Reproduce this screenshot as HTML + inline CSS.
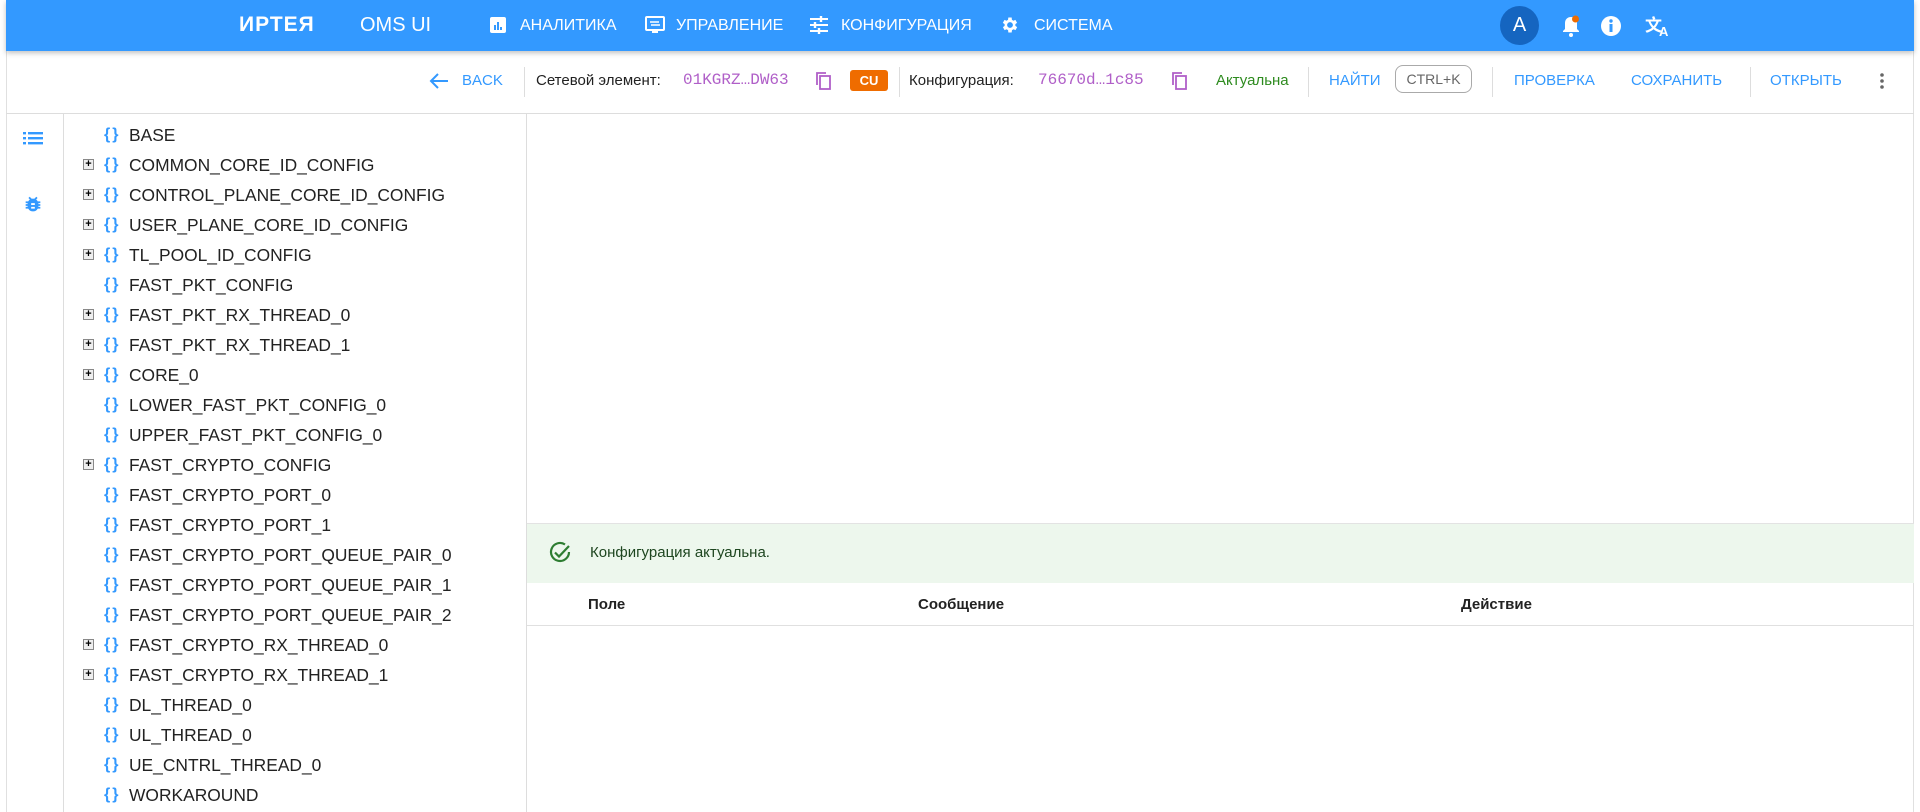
<!DOCTYPE html>
<html><head><meta charset="utf-8"><style>
*{box-sizing:border-box;margin:0;padding:0}
body{width:1920px;height:812px;background:#fff;font-family:"Liberation Sans","Noto Sans CJK SC",sans-serif;position:relative;overflow:hidden;color:#222}
.a{position:absolute;white-space:nowrap}
.hdr{position:absolute;left:6px;top:0;width:1908px;height:51px;background:#3399ff;border-radius:0 0 0 0;box-shadow:0 2px 5px rgba(0,0,0,.25)}
.card{position:absolute;left:6px;top:0;width:1908px;height:812px;border-left:1px solid #e0e0e0;border-right:1px solid #e0e0e0}
.nav{color:#fff;font-size:16px;top:17px}
.tb{top:72px;font-size:15px}
.blue{color:#3399ff}
.mono{font-family:"Liberation Mono",monospace;color:#b05fc8;font-size:16px}
.vd{position:absolute;top:67px;width:1px;height:30px;background:#ddd}
.row{position:absolute;left:0;height:30px;font-size:17.4px;color:#222;line-height:30px}
.pl{position:absolute;top:9px;left:83px;width:11px;height:11px;border:1px solid #888;background:#eee;font-size:11px;line-height:8px;text-align:center;color:#000;font-weight:bold}
.br{position:absolute;left:104px;top:0;color:#3399ff;font-weight:bold;font-size:16px;letter-spacing:2px}
.tx{position:absolute;left:129px;top:0}
</style></head><body>
<div class="card"></div>
<div class="hdr"></div>
<div class="a" style="left:239px;top:13px;color:#fff;font-size:21px;font-weight:bold;letter-spacing:1px">ИРТЕЯ</div>
<div class="a" style="left:360px;top:14px;color:#fff;font-size:20px">OMS UI</div>
<svg class="a" style="left:489px;top:16px" width="18" height="18" viewBox="0 0 18 18"><rect x="1" y="1" width="16" height="16" rx="2" fill="#fff"/><rect x="5" y="9" width="2" height="5" fill="#3399ff"/><rect x="8" y="6" width="2" height="8" fill="#3399ff"/><rect x="11" y="11" width="2" height="3" fill="#3399ff"/></svg>
<div class="a nav" style="left:520px">АНАЛИТИКА</div>
<svg class="a" style="left:644px;top:15px" width="22" height="20" viewBox="0 0 22 20"><rect x="2" y="2" width="18" height="13" rx="1" fill="none" stroke="#fff" stroke-width="2"/><path d="M6 7h9M16 10H7" stroke="#fff" stroke-width="1.6"/><path d="M8 17h6" stroke="#fff" stroke-width="2"/></svg>
<div class="a nav" style="left:676px">УПРАВЛЕНИЕ</div>
<svg class="a" style="left:809px;top:16px" width="20" height="18" viewBox="0 0 20 18"><path d="M1 3h18M1 9h18M1 15h18" stroke="#fff" stroke-width="2"/><path d="M12 0v6M6 6v6M10 12v6" stroke="#fff" stroke-width="2.4"/></svg>
<div class="a nav" style="left:841px">КОНФИГУРАЦИЯ</div>
<svg class="a" style="left:1000px;top:15px" width="20" height="20" viewBox="0 0 24 24"><path fill="#fff" d="M19.4 13a7.5 7.5 0 000-2l2.1-1.6-2-3.5-2.5 1a7 7 0 00-1.7-1L15 3h-4l-.4 2.9a7 7 0 00-1.7 1l-2.5-1-2 3.5L6.6 11a7.5 7.5 0 000 2l-2.1 1.6 2 3.5 2.5-1a7 7 0 001.7 1L11 21h4l.4-2.9a7 7 0 001.7-1l2.5 1 2-3.5zM13 15.5a3.5 3.5 0 110-7 3.5 3.5 0 010 7z" transform="translate(-1 0)"/></svg>
<div class="a nav" style="left:1034px">СИСТЕМА</div>
<div class="a" style="left:1500px;top:6px;width:39px;height:39px;border-radius:50%;background:#1565c0;color:#fff;font-size:20px;text-align:center;line-height:39px">A</div>
<svg class="a" style="left:1560px;top:14px" width="22" height="24" viewBox="0 0 22 24"><path d="M11 3c-4 0-6 3-6 6v6l-2 2v1h16v-1l-2-2V9c0-3-2-6-6-6z" fill="#fff"/><circle cx="11" cy="21" r="2" fill="#fff"/><circle cx="15.5" cy="5" r="3.5" fill="#ef6c00"/></svg>
<svg class="a" style="left:1600px;top:15px" width="22" height="22" viewBox="0 0 22 22"><circle cx="11" cy="11" r="10" fill="#fff"/><rect x="9.5" y="9" width="3" height="8" fill="#3399ff"/><circle cx="11" cy="6" r="1.7" fill="#3399ff"/></svg>
<div class="a" style="left:1645px;top:11px;color:#fff;font-size:17px;font-weight:bold">文<span style="font-size:13px;position:relative;top:5px;left:-3px">A</span></div>

<svg class="a" style="left:429px;top:72px" width="20" height="18" viewBox="0 0 20 18"><path d="M19 9H3M9 2L2 9l7 7" fill="none" stroke="#3399ff" stroke-width="2"/></svg>
<div class="a tb blue" style="left:462px">BACK</div>
<div class="vd" style="left:524px"></div>
<div class="a tb" style="left:536px">Сетевой элемент:</div>
<div class="a tb mono" style="left:683px;top:71px">01KGRZ…DW63</div>
<svg class="a" style="left:816px;top:72px" width="16" height="18" viewBox="0 0 16 18"><rect x="4" y="4" width="10" height="13" fill="none" stroke="#b05fc8" stroke-width="1.8"/><path d="M1 13V1h9" fill="none" stroke="#b05fc8" stroke-width="1.8"/></svg>
<div class="a" style="left:850px;top:70px;width:38px;height:21px;background:#ef6c00;border-radius:3px;color:#fff;font-size:13px;font-weight:bold;text-align:center;line-height:21px">CU</div>
<div class="vd" style="left:899px"></div>
<div class="a tb" style="left:909px">Конфигурация:</div>
<div class="a tb mono" style="left:1038px;top:71px">76670d…1c85</div>
<svg class="a" style="left:1172px;top:72px" width="16" height="18" viewBox="0 0 16 18"><rect x="4" y="4" width="10" height="13" fill="none" stroke="#b05fc8" stroke-width="1.8"/><path d="M1 13V1h9" fill="none" stroke="#b05fc8" stroke-width="1.8"/></svg>
<div class="a tb" style="left:1216px;color:#2e8b1f">Актуальна</div>
<div class="vd" style="left:1308px"></div>
<div class="a tb blue" style="left:1329px">НАЙТИ</div>
<div class="a" style="left:1395px;top:65px;width:77px;height:28px;border:1px solid #aaa;border-radius:8px;color:#666;font-size:14px;text-align:center;line-height:26px">CTRL+K</div>
<div class="vd" style="left:1492px"></div>
<div class="a tb blue" style="left:1514px">ПРОВЕРКА</div>
<div class="a tb blue" style="left:1631px">СОХРАНИТЬ</div>
<div class="vd" style="left:1750px"></div>
<div class="a tb blue" style="left:1770px">ОТКРЫТЬ</div>
<svg class="a" style="left:1878px;top:72px" width="8" height="18" viewBox="0 0 8 18"><circle cx="4" cy="3" r="1.8" fill="#666"/><circle cx="4" cy="9" r="1.8" fill="#666"/><circle cx="4" cy="15" r="1.8" fill="#666"/></svg>
<div class="a" style="left:6px;top:113px;width:1908px;height:1px;background:#ddd"></div>
<div class="a" style="left:63px;top:113px;width:1px;height:699px;background:#ddd"></div>
<div class="a" style="left:526px;top:113px;width:1px;height:699px;background:#ddd"></div>

<svg class="a" style="left:23px;top:131px" width="20" height="14" viewBox="0 0 20 14"><g fill="#3399ff"><rect x="0" y="1" width="3" height="2.4"/><rect x="5" y="1" width="15" height="2.4"/><rect x="0" y="6" width="3" height="2.4"/><rect x="5" y="6" width="15" height="2.4"/><rect x="0" y="11" width="3" height="2.4"/><rect x="5" y="11" width="15" height="2.4"/></g></svg>
<svg class="a" style="left:22px;top:194px" width="22" height="22" viewBox="0 0 24 24"><path fill="#3399ff" d="M20 8h-2.8a6 6 0 00-1.8-2l1.6-1.6L15.6 3l-2.2 2.2a6 6 0 00-2.8 0L8.4 3 7 4.4 8.6 6a6 6 0 00-1.8 2H4v2h2.1a6 6 0 000 1H4v2h2.1v1H4v2h2.8a6 6 0 0010.4 0H20v-2h-2.1v-1H20v-2h-2.1a6 6 0 000-1H20zm-6 8h-4v-2h4zm0-4h-4v-2h4z"/></svg>

<div class="a" style="left:0;top:0">
<div class="row" style="top:120px"><span class="br">{}</span><span class="tx">BASE</span></div>
<div class="row" style="top:150px"><span class="pl">+</span><span class="br">{}</span><span class="tx">COMMON_CORE_ID_CONFIG</span></div>
<div class="row" style="top:180px"><span class="pl">+</span><span class="br">{}</span><span class="tx">CONTROL_PLANE_CORE_ID_CONFIG</span></div>
<div class="row" style="top:210px"><span class="pl">+</span><span class="br">{}</span><span class="tx">USER_PLANE_CORE_ID_CONFIG</span></div>
<div class="row" style="top:240px"><span class="pl">+</span><span class="br">{}</span><span class="tx">TL_POOL_ID_CONFIG</span></div>
<div class="row" style="top:270px"><span class="br">{}</span><span class="tx">FAST_PKT_CONFIG</span></div>
<div class="row" style="top:300px"><span class="pl">+</span><span class="br">{}</span><span class="tx">FAST_PKT_RX_THREAD_0</span></div>
<div class="row" style="top:330px"><span class="pl">+</span><span class="br">{}</span><span class="tx">FAST_PKT_RX_THREAD_1</span></div>
<div class="row" style="top:360px"><span class="pl">+</span><span class="br">{}</span><span class="tx">CORE_0</span></div>
<div class="row" style="top:390px"><span class="br">{}</span><span class="tx">LOWER_FAST_PKT_CONFIG_0</span></div>
<div class="row" style="top:420px"><span class="br">{}</span><span class="tx">UPPER_FAST_PKT_CONFIG_0</span></div>
<div class="row" style="top:450px"><span class="pl">+</span><span class="br">{}</span><span class="tx">FAST_CRYPTO_CONFIG</span></div>
<div class="row" style="top:480px"><span class="br">{}</span><span class="tx">FAST_CRYPTO_PORT_0</span></div>
<div class="row" style="top:510px"><span class="br">{}</span><span class="tx">FAST_CRYPTO_PORT_1</span></div>
<div class="row" style="top:540px"><span class="br">{}</span><span class="tx">FAST_CRYPTO_PORT_QUEUE_PAIR_0</span></div>
<div class="row" style="top:570px"><span class="br">{}</span><span class="tx">FAST_CRYPTO_PORT_QUEUE_PAIR_1</span></div>
<div class="row" style="top:600px"><span class="br">{}</span><span class="tx">FAST_CRYPTO_PORT_QUEUE_PAIR_2</span></div>
<div class="row" style="top:630px"><span class="pl">+</span><span class="br">{}</span><span class="tx">FAST_CRYPTO_RX_THREAD_0</span></div>
<div class="row" style="top:660px"><span class="pl">+</span><span class="br">{}</span><span class="tx">FAST_CRYPTO_RX_THREAD_1</span></div>
<div class="row" style="top:690px"><span class="br">{}</span><span class="tx">DL_THREAD_0</span></div>
<div class="row" style="top:720px"><span class="br">{}</span><span class="tx">UL_THREAD_0</span></div>
<div class="row" style="top:750px"><span class="br">{}</span><span class="tx">UE_CNTRL_THREAD_0</span></div>
<div class="row" style="top:780px"><span class="br">{}</span><span class="tx">WORKAROUND</span></div>
</div>

<div class="a" style="left:527px;top:523px;width:1387px;height:60px;background:#edf7ed;border-top:1px solid #e3e3e3"></div>
<svg class="a" style="left:548px;top:541px" width="24" height="24" viewBox="0 0 24 24"><path d="M21 11a9 9 0 11-4-7.5" fill="none" stroke="#2e7d32" stroke-width="2.2"/><path d="M7 11.5l4 4L21 5" fill="none" stroke="#2e7d32" stroke-width="2.2"/></svg>
<div class="a" style="left:590px;top:544px;font-size:15px;color:#1e4620">Конфигурация актуальна.</div>
<div class="a" style="left:588px;top:596px;font-size:15px;font-weight:bold">Поле</div>
<div class="a" style="left:918px;top:596px;font-size:15px;font-weight:bold">Сообщение</div>
<div class="a" style="left:1461px;top:596px;font-size:15px;font-weight:bold">Действие</div>
<div class="a" style="left:527px;top:625px;width:1387px;height:1px;background:#e0e0e0"></div>
</body></html>
